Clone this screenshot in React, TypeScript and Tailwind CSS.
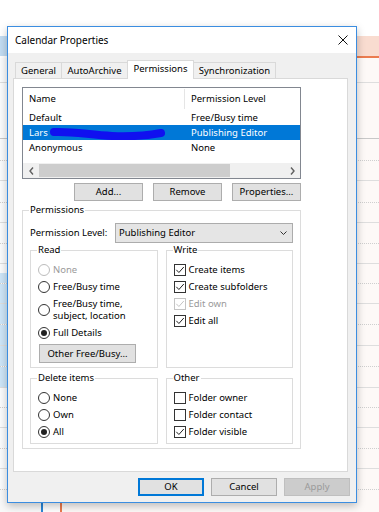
import React from 'react';

const bgRows = [
  { cls: 'h-[25px] border-b border-[#dedede]', left: '' },
  { cls: 'h-[56px] border-b border-[#c8c8c8]', left: '' },
  { cls: 'h-[22px] border-b border-dotted border-[#cfcfcf]', left: '' },
  { cls: 'h-[20px] border-b border-[#dedede]', left: '' },
  { cls: 'h-[22px] border-b border-dotted border-[#cfcfcf]', left: '' },
  { cls: 'h-[20px] border-b border-[#dedede]', left: '' },
  { cls: 'h-[21px] border-b border-dotted border-[#cfcfcf]', left: '' },
  { cls: 'h-[20px] border-b border-[#dedede]', left: '' },
  { cls: 'h-[20px] border-b border-dotted border-[#cfcfcf]', left: 'top' },
  { cls: 'h-[20px] border-b border-[#dedede]', left: 'blue' },
  { cls: 'h-[21px] border-b border-dotted border-[#cfcfcf]', left: 'blue' },
  { cls: 'h-[21px] border-b border-[#dedede]', left: 'blue' },
  { cls: 'h-[21px] border-b border-dotted border-[#cfcfcf]', left: 'blue' },
  { cls: 'h-[21px] border-b border-[#dedede]', left: 'blue' },
  { cls: 'h-[20px] border-b border-dotted border-[#cfcfcf]', left: '' },
  { cls: 'h-[20px] border-b border-[#dedede]', left: '' },
  { cls: 'h-[21px] border-b border-dotted border-[#cfcfcf]', left: '' },
  { cls: 'h-[20px] border-b border-[#dedede]', left: '' },
  { cls: 'h-[21px] border-b border-dotted border-[#cfcfcf]', left: '' },
];

function Radio({ checked, disabled }: { checked?: boolean; disabled?: boolean }) {
  return (
    <span
      className={`flex h-[12px] w-[12px] shrink-0 items-center justify-center rounded-full border bg-white ${
        disabled ? 'border-[#bcbcbc]' : 'border-[#333333]'
      }`}
    >
      {checked && <span className="h-[6px] w-[6px] rounded-full bg-[#222222]" />}
    </span>
  );
}

function Check({ checked, disabled }: { checked?: boolean; disabled?: boolean }) {
  return (
    <span
      className={`flex h-[12px] w-[12px] shrink-0 items-center justify-center border bg-white ${
        disabled ? 'border-[#c4c4c4]' : 'border-[#333333]'
      }`}
    >
      {checked && (
        <svg width="10" height="10" viewBox="0 0 10 10">
          <path d="M1.3 4.8 L3.9 7.5 L8.8 2" fill="none" stroke={disabled ? '#c4c4c4' : '#222222'} strokeWidth="1" />
        </svg>
      )}
    </span>
  );
}

function Opt({
  kind,
  checked,
  disabled,
  children,
}: {
  kind: 'radio' | 'check';
  checked?: boolean;
  disabled?: boolean;
  children: React.ReactNode;
}) {
  return (
    <div className={`flex h-[17px] items-center gap-[3px] ${disabled ? 'text-[#9a9a9a]' : ''}`}>
      {kind === 'radio' ? <Radio checked={checked} disabled={disabled} /> : <Check checked={checked} disabled={disabled} />}
      <span>{children}</span>
    </div>
  );
}

function Group({ title, className, children }: { title: string; className?: string; children: React.ReactNode }) {
  return (
    <fieldset className={`border border-[#dcdcdc] ${className ?? ''}`}>
      <legend className="-ml-px px-px leading-[12px]">{title}</legend>
      {children}
    </fieldset>
  );
}

function Chevron({ dir }: { dir: 'left' | 'right' }) {
  return (
    <svg width="5" height="8" viewBox="0 0 5 8">
      <path
        d={dir === 'left' ? 'M4 0.5 L1 4 L4 7.5' : 'M1 0.5 L4 4 L1 7.5'}
        fill="none"
        stroke="#606060"
        strokeWidth="1.4"
      />
    </svg>
  );
}

const btn = 'flex items-center justify-center border border-[#adadad] bg-[#e1e1e1]';

export default function App() {
  return (
    <div className="relative h-[512px] w-[379px] overflow-hidden bg-[#fdf9f7] font-['Noto_Sans',sans-serif] text-[9.5px] leading-[12px] text-black">
      {/* calendar behind the dialog */}
      <div className="flex flex-col">
        <div className="h-[36px] bg-white" />
        <div className="flex h-[20px]">
          <div className="w-[7px] bg-[#c2dcf2]" />
          <div className="flex-1" />
          <div className="w-[23px] bg-[#f9dcd0]" />
        </div>
        <div className="flex h-[2px]">
          <div className="w-[7px] bg-white" />
          <div className="flex-1" />
          <div className="w-[23px] bg-[#eb7c50]" />
        </div>
        {bgRows.map((r, i) => (
          <div key={i} className={`flex ${r.cls}`}>
            {r.left === 'blue' && <div className="w-[7px] bg-[#cde5f7]" />}
            {r.left === 'top' && (
              <div className="flex w-[7px] flex-col">
                <div className="h-[9px] bg-[#fbfcfd]" />
                <div className="flex-1 bg-[#cde5f7]" />
              </div>
            )}
            {r.left === '' && <div className="w-[7px] bg-[#fbfcfd]" />}
          </div>
        ))}
        <div className="flex h-[22px]">
          <div className="w-[41px] bg-[#f9f9f9]" />
          <div className="w-[21px] border-x-2 border-l-[#2a86d6] border-r-[#ea7a4d] bg-white" />
          <div className="flex-1" />
        </div>
      </div>

      {/* dialog window */}
      <div className="absolute left-[7px] top-[26px] flex h-[477px] w-[350px] flex-col border border-[#3b8de0] bg-[#f0f0f0] shadow-[0_3px_8px_rgba(0,0,0,0.25)]">
        <div className="flex h-[26px] items-center justify-between bg-white pl-[7px] pr-[8px]">
          <span className="text-[10px]">Calendar Properties</span>
          <svg width="10" height="10" viewBox="0 0 10 10">
            <path d="M0.5 0.5 L9.5 9.5 M9.5 0.5 L0.5 9.5" stroke="#111111" strokeWidth="1" />
          </svg>
        </div>

        {/* tabs */}
        <div className="ml-[7px] mt-[7px] flex h-[18px] items-end">
          <div className="flex h-[16px] w-[46px] items-center justify-center border-l border-t border-[#d9d9d9]">General</div>
          <div className="flex h-[16px] w-[66px] items-center justify-center border-l border-t border-[#d9d9d9]">AutoArchive</div>
          <div className="relative z-10 -mb-px flex h-[19px] w-[67px] items-center justify-center border-x border-t border-[#d9d9d9] bg-white pb-[2px]">
            Permissions
          </div>
          <div className="flex h-[16px] w-[82px] items-center justify-center border-r border-t border-[#d9d9d9]">Synchronization</div>
        </div>

        {/* tab panel */}
        <div className="ml-[5px] h-[394px] w-[335px] border border-[#d9d9d9] bg-white px-[8px] pt-[8px]">
          {/* user list */}
          <div className="flex h-[92px] w-[279px] flex-col border border-[#828790]">
            <div className="flex h-[22px] items-center">
              <div className="w-[161px] pl-[6px]">Name</div>
              <div className="h-[20px] w-px bg-[#e5e5e5]" />
              <div className="pl-[6px]">Permission Level</div>
            </div>
            <div className="flex h-[15px] items-center">
              <div className="w-[162px] pl-[6px]">Default</div>
              <div className="pl-[6px]">Free/Busy time</div>
            </div>
            <div className="flex h-[15px] items-center bg-[#0078d7] text-white">
              <div className="flex w-[162px] items-center pl-[6px]">
                <span>Lars</span>
                <svg width="116" height="15" viewBox="0 0 116 15" className="ml-[2px] shrink-0">
                  <path d="M4 7 C 22 6, 40 10, 62 11 S 100 10, 111 8" fill="none" stroke="#1010f0" strokeWidth="8" strokeLinecap="round" />
                </svg>
              </div>
              <div className="pl-[6px]">Publishing Editor</div>
            </div>
            <div className="flex h-[15px] items-center">
              <div className="w-[162px] pl-[6px]">Anonymous</div>
              <div className="pl-[6px]">None</div>
            </div>
            <div className="mt-auto flex h-[15px] items-center bg-[#f0f0f0]">
              <div className="flex w-[16px] justify-center">
                <Chevron dir="left" />
              </div>
              <div className="h-[13px] w-[191px] bg-[#cdcdcd]" />
              <div className="flex-1" />
              <div className="flex w-[16px] justify-center">
                <Chevron dir="right" />
              </div>
            </div>
          </div>

          <div className="mt-[4px] flex w-[279px] justify-end gap-[10px]">
            <div className={`${btn} h-[18px] w-[69px]`}>Add...</div>
            <div className={`${btn} h-[18px] w-[69px]`}>Remove</div>
            <div className={`${btn} h-[18px] w-[69px]`}>Properties...</div>
          </div>

          <Group title="Permissions" className="mt-[3px] w-[279px] px-[7px] pb-[4px]">
            <div className="mt-[7px] flex h-[20px] items-center">
              <div className="w-[85px]">Permission Level:</div>
              <div className="flex h-[20px] w-[178px] items-center justify-between border border-[#acacac] bg-[#e5e5e5] pl-[3px] pr-[5px]">
                <span>Publishing Editor</span>
                <svg width="7" height="4" viewBox="0 0 7 4">
                  <path d="M0.5 0.5 L3.5 3.5 L6.5 0.5" fill="none" stroke="#333333" strokeWidth="1" />
                </svg>
              </div>
            </div>

            <div className="mt-[1px] grid grid-cols-2 gap-x-[8px] gap-y-[4px]">
              <Group title="Read" className="px-[7px] pb-[4px] pt-[5px]">
                <Opt kind="radio" disabled>
                  None
                </Opt>
                <Opt kind="radio">Free/Busy time</Opt>
                <div className="flex h-[29px] items-center gap-[3px]">
                  <Radio />
                  <span>
                    Free/Busy time,
                    <br />
                    subject, location
                  </span>
                </div>
                <Opt kind="radio" checked>
                  Full Details
                </Opt>
                <div className={`${btn} ml-px mt-[3px] h-[19px] w-[97px]`}>Other Free/Busy...</div>
              </Group>

              <Group title="Write" className="px-[7px] pb-[4px] pt-[5px]">
                <Opt kind="check" checked>
                  Create items
                </Opt>
                <Opt kind="check" checked>
                  Create subfolders
                </Opt>
                <Opt kind="check" checked disabled>
                  Edit own
                </Opt>
                <Opt kind="check" checked>
                  Edit all
                </Opt>
              </Group>

              <Group title="Delete items" className="px-[7px] pb-[3px] pt-[5px]">
                <Opt kind="radio">None</Opt>
                <Opt kind="radio">Own</Opt>
                <Opt kind="radio" checked>
                  All
                </Opt>
              </Group>

              <Group title="Other" className="px-[7px] pb-[3px] pt-[5px]">
                <Opt kind="check">Folder owner</Opt>
                <Opt kind="check">Folder contact</Opt>
                <Opt kind="check" checked>
                  Folder visible
                </Opt>
              </Group>
            </div>
          </Group>
        </div>

        {/* dialog buttons */}
        <div className="mt-[6px] flex justify-end gap-[7px] pr-[6px]">
          <div className="flex h-[18px] w-[66px] items-center justify-center border-2 border-[#0078d7] bg-[#e1e1e1]">OK</div>
          <div className={`${btn} h-[18px] w-[66px]`}>Cancel</div>
          <div className="flex h-[18px] w-[66px] items-center justify-center border border-[#bfbfbf] bg-[#cccccc] text-[#9a9a9a]">
            Apply
          </div>
        </div>
      </div>
    </div>
  );
}
